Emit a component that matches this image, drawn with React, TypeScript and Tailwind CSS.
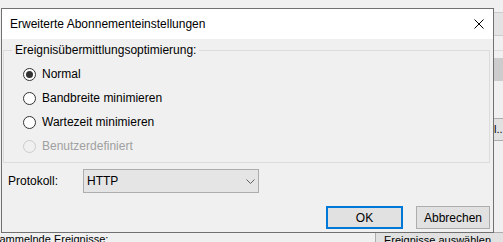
import React from 'react'

interface RadioRowProps {
  label: string
  checked?: boolean
  disabled?: boolean
}

function RadioRow({ label, checked = false, disabled = false }: RadioRowProps) {
  return (
    <div className="flex h-[24px] items-center gap-[6px]">
      <div
        className={
          disabled
            ? 'flex h-[13px] w-[13px] shrink-0 items-center justify-center rounded-full border border-[#cccccc] bg-[#f0f0f0]'
            : 'flex h-[13px] w-[13px] shrink-0 items-center justify-center rounded-full border border-[#333333] bg-white'
        }
      >
        {checked && <div className="h-[7px] w-[7px] rounded-full bg-[#333333]" />}
      </div>
      <span className={disabled ? 'text-[#a0a0a0]' : 'text-black'}>{label}</span>
    </div>
  )
}

export default function App() {
  return (
    <div className="relative h-[242px] w-[503px] overflow-hidden bg-[#f0f0f0] font-['Liberation_Sans',Arial,sans-serif] text-[12px] leading-[14px] text-black">
      {/* window behind the dialog */}
      <div className="flex flex-col text-[11px]">
        <div className="ml-[494px] mt-[12px] h-[24px] border-y border-[#cccccc] bg-[#e3e3e3]" />
        <div className="ml-[494px] mt-[14px] border-t border-[#dcdcdc]" />
        <div className="ml-[494px] mt-[7px] h-[23px] bg-[#cccccc]" />
        <div className="ml-[494px] mt-[37px] h-[23px] whitespace-nowrap border-y border-[#adadad] bg-[#e1e1e1] leading-[21px]">
          l...
        </div>
        <div className="mt-[91px] flex h-[12px] w-[520px] items-start">
          <span className="ml-[-6px] whitespace-nowrap">sammelnde Ereignisse:</span>
          <div className="ml-auto h-[24px] w-[145px] border border-[#adadad] bg-[#e1e1e1] pl-[8px] whitespace-nowrap leading-[14px]">
            Ereignisse auswählen...
          </div>
        </div>
      </div>

      {/* dialog */}
      <div className="absolute left-[1px] top-[8px] flex h-[225px] w-[493px] flex-col border border-[#717171] bg-[#f0f0f0]">
        <div className="flex h-[30px] shrink-0 items-center justify-between bg-white pl-[8px] pr-[9px]">
          <span>Erweiterte Abonnementeinstellungen</span>
          <svg width="10" height="10" viewBox="0 0 10 10" className="block">
            <path d="M0.5 0.5 L9.5 9.5 M9.5 0.5 L0.5 9.5" stroke="#000" strokeWidth="1" fill="none" />
          </svg>
        </div>

        <fieldset className="ml-[1px] mr-[3px] mt-[4px] border border-[#dcdcdc]">
          <legend className="ml-[8px] px-[3px] leading-[14px]">Ereignisübermittlungsoptimierung:</legend>
          <div className="flex flex-col pb-[4px] pl-[19px] pt-[5px]">
            <RadioRow label="Normal" checked />
            <RadioRow label="Bandbreite minimieren" />
            <RadioRow label="Wartezeit minimieren" />
            <RadioRow label="Benutzerdefiniert" disabled />
          </div>
        </fieldset>

        <div className="mt-[6px] flex h-[24px] items-center">
          <span className="ml-[6px] w-[75px] shrink-0">Protokoll:</span>
          <div className="flex h-[24px] w-[176px] items-center justify-between border border-[#adadad] bg-[#e5e5e5] pl-[3px] pr-[3px]">
            <span>HTTP</span>
            <svg width="9" height="5" viewBox="0 0 9 5" className="block">
              <polyline points="0.5,0.5 4.5,4.5 8.5,0.5" stroke="#606060" strokeWidth="1" fill="none" />
            </svg>
          </div>
        </div>

        <div className="mr-[3px] mt-[13px] flex justify-end gap-[13px]">
          <button className="flex h-[23px] w-[77px] items-center justify-center border-2 border-[#0078d7] bg-[#e1e1e1]">
            OK
          </button>
          <button className="flex h-[23px] w-[74px] items-center justify-center border border-[#adadad] bg-[#e1e1e1]">
            Abbrechen
          </button>
        </div>
      </div>
    </div>
  )
}
